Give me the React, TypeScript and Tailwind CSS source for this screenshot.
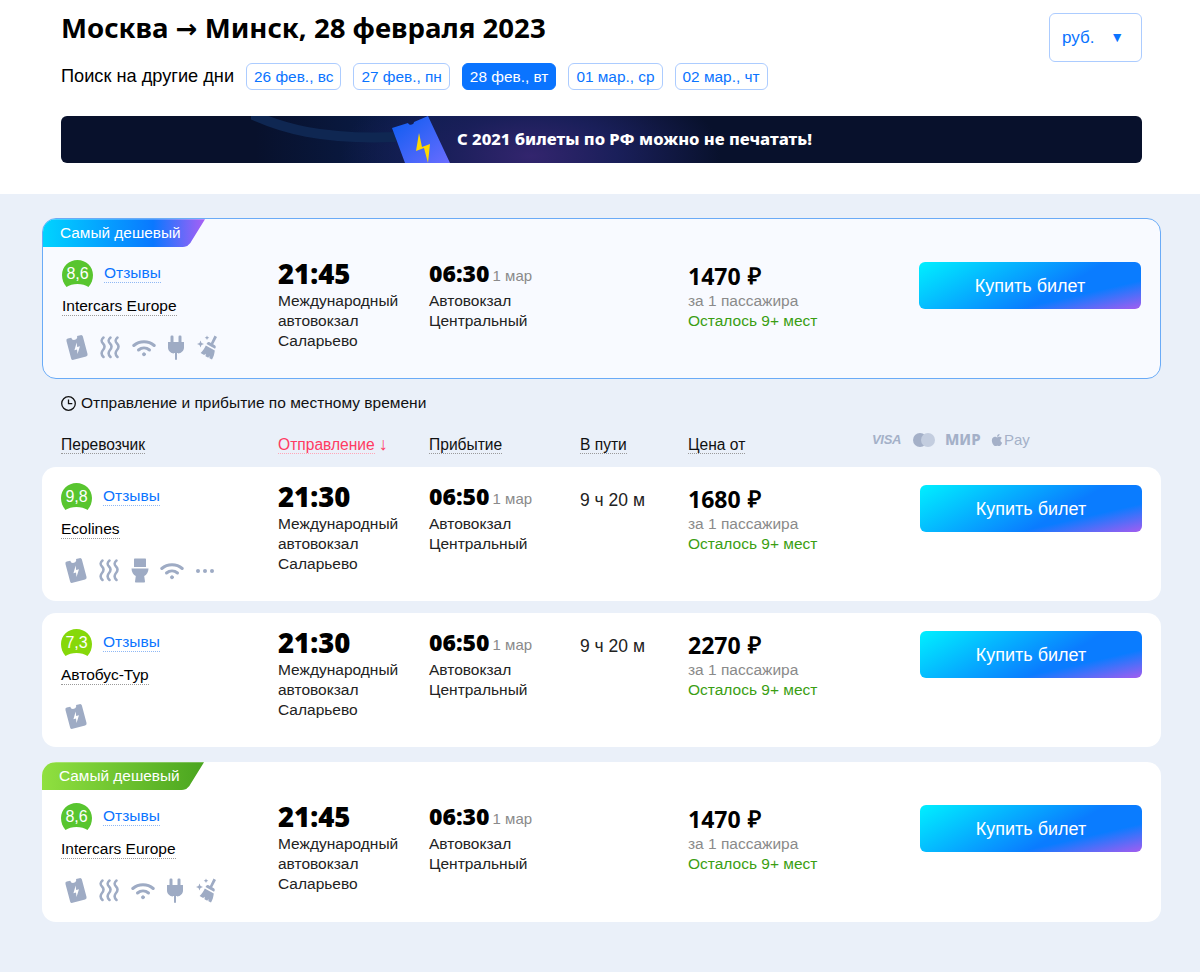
import { ReactNode } from "react";
import { FaApple } from "react-icons/fa";

const HEAD = "font-['Noto_Sans',sans-serif]";

const Ticket = () => (
  <svg width="24" height="27" viewBox="0 0 24 27" className="fill-[#9eabc4] -ml-[2px] -mr-[1px]">
    <g transform="rotate(-15 12 13.500)">
      <path
        fillRule="evenodd"
        d="M5.500 2.500H9a3 3 0 0 0 6 0h3.500a2 2 0 0 1 2 2V22.500a2 2 0 0 1-2 2h-13a2 2 0 0 1-2-2V4.500a2 2 0 0 1 2-2ZM13 8.500 8.800 15.500h2.700l-.7 4.500 4.400-7h-2.900Z"
      />
    </g>
  </svg>
);

const Steam = () => (
  <svg width="22" height="23" viewBox="0 0 22 23" fill="none" className="stroke-[#9eabc4]" strokeWidth="2.500" strokeLinecap="round">
    <path d="M4.500 1.500Q1 4.500 4 7.500T4 14Q1 17.500 4.500 21" />
    <path d="M11.500 1.500Q8 4.500 11 7.500T11 14Q8 17.500 11.500 21" />
    <path d="M18.500 1.500Q15 4.500 18 7.500T18 14Q15 17.500 18.500 21" />
  </svg>
);

const Wifi = () => (
  <svg width="24" height="18" viewBox="0 0 24 18" fill="none" className="stroke-[#9eabc4]" strokeWidth="3" strokeLinecap="round">
    <path d="M1.800 6.500C7.500 1.500 16.500 1.500 22.200 6.500" />
    <path d="M6.500 11c3.200-2.600 7.800-2.600 11 0" />
    <circle cx="12" cy="15.300" r="1.500" className="fill-[#9eabc4]" strokeWidth="1" />
  </svg>
);

const Plug = () => (
  <svg width="18" height="25" viewBox="0 0 18 25" className="fill-[#9eabc4]">
    <rect x="3.500" y="0.500" width="3" height="7" rx="1.200" />
    <rect x="11.500" y="0.500" width="3" height="7" rx="1.200" />
    <path d="M1 7h16v5.500c0 3.300-2.500 5.700-6 6V18H7v.5c-3.500-.3-6-2.700-6-6Z" />
    <rect x="8" y="17" width="2" height="8" rx="1" />
  </svg>
);

const Broom = () => (
  <svg width="22" height="25" viewBox="0 0 22 25" className="fill-[#9eabc4]">
    <path d="M18.500 0.500 21 2l-3.800 7.200 1.600 1c1 .6 1.200 1.700.8 2.500l-.6 1L10.500 9l.6-1c.5-.9 1.600-1.200 2.500-.7l1.300.7Z" />
    <path d="M9.800 10.500l9 5c-.4 3.500-1.300 6.600-2.800 9l-2.500-1.200-.2-2.300-1 1.700-2.800-1.500.3-2.400-1.700 1.300-3.500-2.200c2-1.500 3.800-4.200 5.200-7.400Z" />
    <path d="M4.500 5.500 5.500 8l2.500 1-2.500 1-1 2.500-1-2.500L1 9l2.500-1ZM11 0.500l.7 1.600 1.600.7-1.600.7-.7 1.600-.7-1.600-1.600-.7 1.600-.7Z" />
  </svg>
);

const Toilet = () => (
  <svg width="18" height="25" viewBox="0 0 18 25" className="fill-[#9eabc4]">
    <path d="M4 0.500h10c.6 0 1 .4 1 1V9H3V1.500c0-.6.4-1 1-1Z" />
    <path d="M0.500 10.500h17c0 3.500-2 6.500-4.300 7.600l.8 5.400c0 .6-.4 1-1 1H5c-.6 0-1-.4-1-1l.8-5.400C2.500 17 .5 14 .5 10.500Z" />
  </svg>
);

const Dots = () => (
  <svg width="20" height="6" viewBox="0 0 20 6" className="fill-[#9eabc4]">
    <circle cx="3" cy="3" r="2" />
    <circle cx="10" cy="3" r="2" />
    <circle cx="17" cy="3" r="2" />
  </svg>
);

const Rating = ({ value, color }: { value: string; color: string }) => (
  <div className="relative flex h-[27px] w-[31px] shrink-0 items-center justify-center">
    <svg width="31" height="27" viewBox="0 0 31 27" className={`absolute inset-0 ${color}`}>
      <path d="M15.500 0C24 0 31 6.500 31 15c0 4.500-1.500 8.500-4.500 12-3-2-6.500-3-11-3s-8 1-11 3C1.500 23.500 0 19.500 0 15 0 6.500 7 0 15.500 0Z" />
    </svg>
    <span className="relative text-[16px] leading-none text-white">{value}</span>
  </div>
);

const Carrier = ({ name, rating, color, icons, width }: { name: string; rating: string; color: string; icons: ReactNode; width: string }) => (
  <div className={`${width} shrink-0 -mt-[2px]`}>
    <div className="flex items-center gap-[11px]">
      <Rating value={rating} color={color} />
      <span className="border-b border-dotted border-[#8fb8f5] text-[15.500px] leading-[18px] text-[#0a74ff]">Отзывы</span>
    </div>
    <div className="mt-[10px] flex">
      <span className="border-b border-dotted border-[#9a9a9a] text-[15.500px] leading-[18px] text-black">{name}</span>
    </div>
    <div className="mt-[18px] flex h-[27px] items-center gap-[11px] pl-[5px]">{icons}</div>
  </div>
);

type Offer = {
  carrier: string;
  rating: string;
  ratingColor: string;
  icons: ReactNode;
  dep: string;
  arr: string;
  duration?: string;
  price: string;
};

const BuyButton = () => (
  <button className="h-[47px] w-[222px] shrink-0 rounded-[6px] bg-[linear-gradient(167deg,transparent_71%,#a45cf0_100%),linear-gradient(150deg,#00f0ff_0%,#0a7cff_62%)] pt-[2px] text-[18px] text-white">
    Купить билет
  </button>
);

const OfferRow = ({ o, carrierWidth = "w-[217px]" }: { o: Offer; carrierWidth?: string }) => (
  <div className="flex pl-[19px] pr-[19px] pt-[18px]">
    <Carrier name={o.carrier} rating={o.rating} color={o.ratingColor} icons={o.icons} width={carrierWidth} />
    <div className="w-[151px] shrink-0 -mt-[2px] text-[15.500px] leading-[20px] text-[#222]">
      <div className={`${HEAD} h-[27px] text-[27.500px] font-black leading-[27px] text-black`}>{o.dep}</div>
      <div className="mt-[4px]">Международный<br />автовокзал<br />Саларьево</div>
    </div>
    <div className="w-[151px] shrink-0 -mt-[2px] text-[15.500px] leading-[20px] text-[#222]">
      <div className="flex h-[27px] items-center">
        <span className={`${HEAD} text-[23px] font-black leading-[27px] text-black`}>{o.arr}</span>
        <span className="ml-[3px] mt-[5px] text-[15px] text-[#8a8a8a]">1 мар</span>
      </div>
      <div className="mt-[4px]">Автовокзал<br />Центральный</div>
    </div>
    <div className="w-[108px] shrink-0 pt-[5px] text-[17.500px] leading-[20px] text-[#222]">{o.duration}</div>
    <div className="min-w-0 flex-1 -mt-[2px] text-[15.500px] leading-[20px]">
      <div className="flex h-[27px] items-center pt-[5px] text-[23px] font-bold text-black">
        <span className={`${HEAD} text-[23px] font-bold`}>{o.price}</span>
        <span className="ml-[7px] font-['Liberation_Sans',sans-serif]">₽</span>
      </div>
      <div className="mt-[4px] text-[#8a8a8a]">за 1 пассажира</div>
      <div className="text-[#3a9e12]">Осталось 9+ мест</div>
    </div>
    <BuyButton />
  </div>
);

const Label = ({ gradient }: { gradient: string }) => (
  <div
    className={`flex h-[28px] w-[162px] items-center pb-[2px] pl-[17px] text-[15.400px] text-white [clip-path:path('M0_0H162L149_21Q146_28_138_28H0Z')] ${gradient}`}
  >
    Самый дешевый
  </div>
);

const DateChip = ({ label, active }: { label: string; active?: boolean }) => (
  <span
    className={`flex h-[27px] items-center rounded-[6px] border px-[7px] text-[15.400px] ${
      active ? "border-[#0a74ff] bg-[#0a74ff] text-white" : "border-[#acccff] bg-white text-[#0a74ff]"
    }`}
  >
    {label}
  </span>
);

const Th = ({ children, red }: { children: ReactNode; red?: boolean }) => (
  <span className={`border-b border-dotted text-[15.600px] leading-[18px] ${red ? "border-[#ffa6b8] text-[#ff3b63]" : "border-[#9a9a9a] text-[#111]"}`}>
    {children}
  </span>
);

const full = (
  <>
    <Ticket />
    <Steam />
    <Wifi />
    <Plug />
    <Broom />
  </>
);

const green = "fill-[#58c52f]";

export default function App() {
  return (
    <div className="min-h-[972px] bg-[#eaf0f9] font-['Liberation_Sans',sans-serif]">
      {/* Header */}
      <div className="bg-white pl-[61px] pr-[58px] pb-[31px] pt-[13px]">
        <div className="flex items-start justify-between">
          <div>
            <h1 className={`${HEAD} h-[30px] text-[27.600px] font-bold leading-[28px] text-black`}>
              Москва <span className="font-['DejaVu_Sans',sans-serif] text-[26px] leading-none">→</span> Минск, 28 февраля 2023
            </h1>
            <div className="mt-[20px] flex items-center gap-[12px]">
              <span className="text-[18.200px] text-black">Поиск на другие дни</span>
              <DateChip label="26 фев., вс" />
              <DateChip label="27 фев., пн" />
              <DateChip label="28 фев., вт" active />
              <DateChip label="01 мар., ср" />
              <DateChip label="02 мар., чт" />
            </div>
          </div>
          <div className="flex h-[49px] w-[93px] items-center justify-between rounded-[6px] border border-[#acccff] pl-[12px] pr-[17px] text-[17px] text-[#0a74ff]">
            руб.
            <span className="text-[14px]">▼</span>
          </div>
        </div>

        <div className="relative mt-[26px] flex h-[47px] items-center overflow-hidden rounded-[6px] bg-[radial-gradient(ellipse_190px_90px_at_470px_40px,#33256e_0%,#1a1f5a_45%,transparent_100%),linear-gradient(90deg,#08112c_18%,#0a1e4d_34%,#08112c_55%)] pl-[396px]">
          <svg width="200" height="47" viewBox="0 0 200 47" className="absolute left-[190px] top-0" fill="none">
            <path d="M0 -2C30 12 70 24 145 21" stroke="#0f2752" strokeWidth="10" />
          </svg>
          <svg width="62" height="47" viewBox="0 0 62 47" className="absolute left-[330px] top-0">
            <defs>
              <linearGradient id="tk" x1="0" y1="0" x2="1" y2="1">
                <stop offset="0" stopColor="#0a5cf0" />
                <stop offset="1" stopColor="#6a6cff" />
              </linearGradient>
            </defs>
            <path d="M1 12 17 7c1 3 6 2 6-1l14-6 22 47H14Z" fill="url(#tk)" />
            <path d="M28 17 25 35 33 32 37 47 39 28 31 31Z" fill="#ffd800" />
          </svg>
          <span className={`${HEAD} relative text-[16.600px] font-extrabold text-white`}>С 2021 билеты по РФ можно не печатать!</span>
        </div>
      </div>

      {/* List */}
      <div className="pl-[42px] pr-[39px] pt-[24px]">
        <div className="h-[161px] overflow-hidden rounded-[14px] border border-[#6aabf7] bg-[#f8faff]">
          <Label gradient="bg-[linear-gradient(90deg,#00d4ff_0%,#0a78ff_68%,#a95ff5_100%)]" />
          <div className="-mt-[3px]">
            <OfferRow
              carrierWidth="w-[216px]"
              o={{ carrier: "Intercars Europe", rating: "8,6", ratingColor: green, icons: full, dep: "21:45", arr: "06:30", price: "1470" }}
            />
          </div>
        </div>

        <div className="mt-[15px] flex items-center gap-[5px] pl-[19px] text-[15.500px] leading-[18px] text-[#111]">
          <svg width="15" height="15" viewBox="0 0 15 15" fill="none" stroke="#111" strokeWidth="1.300">
            <circle cx="7.500" cy="7.500" r="6.800" />
            <path d="M7.500 3.500v4.200h3.800" />
          </svg>
          Отправление и прибытие по местному времени
        </div>

        <div className="mt-[23px] flex h-[19px] items-center pl-[19px]">
          <div className="w-[217px]"><Th>Перевозчик</Th></div>
          <div className="w-[151px]"><Th red>Отправление</Th><span className="ml-[4px] text-[18px] leading-none text-[#ff3b63]">↓</span></div>
          <div className="w-[151px]"><Th>Прибытие</Th></div>
          <div className="w-[108px]"><Th>В пути</Th></div>
          <div className="w-[184px]"><Th>Цена от</Th></div>
          <div className="-mt-[10px] flex items-center text-[#a4b0c8]">
            <span className="w-[41px] text-[13px] font-bold italic tracking-[-0.3px]">VISA</span>
            <span className="flex w-[32px]">
              <span className="h-[14px] w-[14px] rounded-full bg-[#a4b0c8]" />
              <span className="-ml-[6px] h-[14px] w-[14px] rounded-full bg-[#c3cddf]" />
            </span>
            <span className={`${HEAD} w-[45px] text-[15px] font-extrabold leading-none`}>МИР</span>
            <span className="flex items-center text-[15px] leading-none">
              <FaApple className="text-[14px]" />
              Pay
            </span>
          </div>
        </div>

        <div className="mt-[13px] flex flex-col gap-[12px]">
          <div className="h-[134px] rounded-[14px] bg-white">
            <OfferRow
              o={{
                carrier: "Ecolines",
                rating: "9,8",
                ratingColor: green,
                icons: (
                  <>
                    <Ticket />
                    <Steam />
                    <Toilet />
                    <Wifi />
                    <Dots />
                  </>
                ),
                dep: "21:30",
                arr: "06:50",
                duration: "9 ч 20 м",
                price: "1680",
              }}
            />
          </div>
          <div className="h-[134px] rounded-[14px] bg-white">
            <OfferRow
              o={{
                carrier: "Автобус-Тур",
                rating: "7,3",
                ratingColor: "fill-[#86d80a]",
                icons: <Ticket />,
                dep: "21:30",
                arr: "06:50",
                duration: "9 ч 20 м",
                price: "2270",
              }}
            />
          </div>
        </div>

        <div className="mt-[15px] h-[160px] overflow-hidden rounded-[14px] bg-white">
          <Label gradient="bg-[linear-gradient(90deg,#90e040_0%,#4aa51f_100%)]" />
          <div className="-mt-[3px]">
            <OfferRow
              o={{ carrier: "Intercars Europe", rating: "8,6", ratingColor: green, icons: full, dep: "21:45", arr: "06:30", price: "1470" }}
            />
          </div>
        </div>
      </div>
    </div>
  );
}
